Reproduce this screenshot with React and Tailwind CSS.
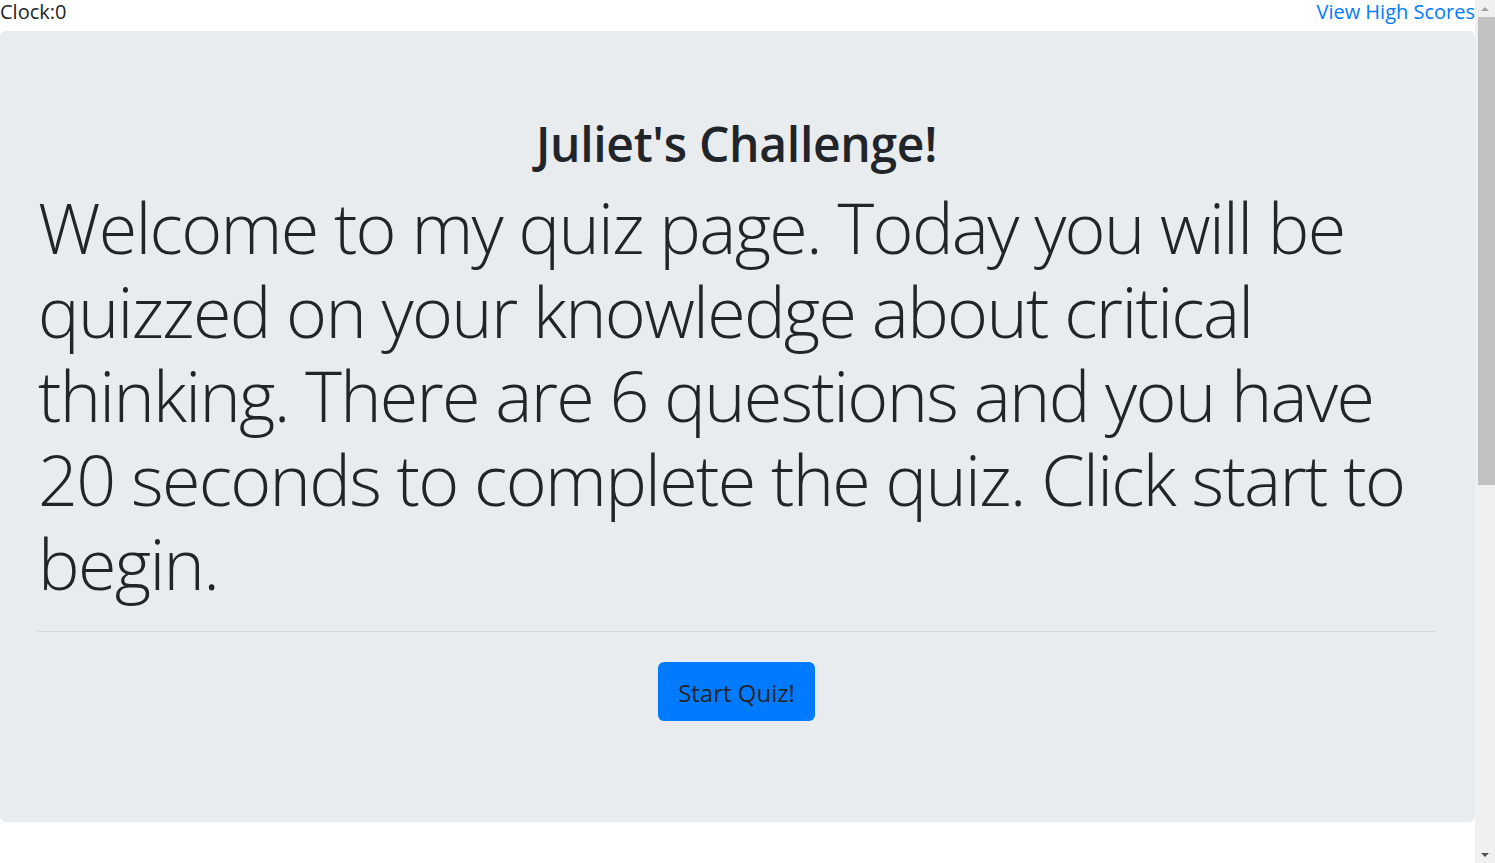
import React from 'react';

const font = { fontFamily: '"Open Sans", "Noto Sans", sans-serif' };

const Scrollbar = () => (
  <div className="w-[20px] h-full bg-[#f0f0f0] flex flex-col items-center shrink-0">
    <div className="h-[17px] w-full flex items-center justify-center">
      <div className="w-0 h-0 border-l-[4px] border-r-[4px] border-b-[4px] border-l-transparent border-r-transparent border-b-[#a3a3a3]" />
    </div>
    <div className="h-[468px] w-[17px] ml-[2px] bg-[#c1c1c1]" />
    <div className="flex-1" />
    <div className="h-[17px] w-full flex items-center justify-center">
      <div className="w-0 h-0 border-l-[4px] border-r-[4px] border-t-[4px] border-l-transparent border-r-transparent border-t-[#505050]" />
    </div>
  </div>
);

const App = () => {
  return (
    <div className="flex h-[863px] w-full overflow-hidden bg-white text-[#212529]" style={font}>
      <div className="flex-1 flex flex-col">
        <div className="h-[31px] shrink-0 flex justify-between items-start text-[20px] leading-[24px]">
          <span>Clock:0</span>
          <a href="#" className="text-[#007bff]">View High Scores</a>
        </div>
        <div className="bg-[#e9ecef] rounded-[6px] pt-[80px] pb-[101px] pl-[38px] pr-[40px]">
          <h1 className="text-center text-[48px] leading-[60px] font-semibold tracking-[-0.3px] translate-y-[3px]">Juliet's Challenge!</h1>
          <p className="mt-[14px] text-[70px] leading-[84px] font-light tracking-[-1.7px]">
            Welcome to my quiz page. Today you will be quizzed on your knowledge about critical thinking. There are 6 questions and you have 20 seconds to complete the quiz. Click start to begin.
          </p>
          <hr className="mt-[26px] border-0 border-t border-[#d2d4d7]" />
          <div className="mt-[30px] flex justify-center">
            <button className="h-[59px] w-[157px] rounded-[6px] bg-[#007bff] text-[24px] font-normal text-[#212529] pt-[2px]">
              Start Quiz!
            </button>
          </div>
        </div>
      </div>
      <Scrollbar />
    </div>
  );
};

export default App;
